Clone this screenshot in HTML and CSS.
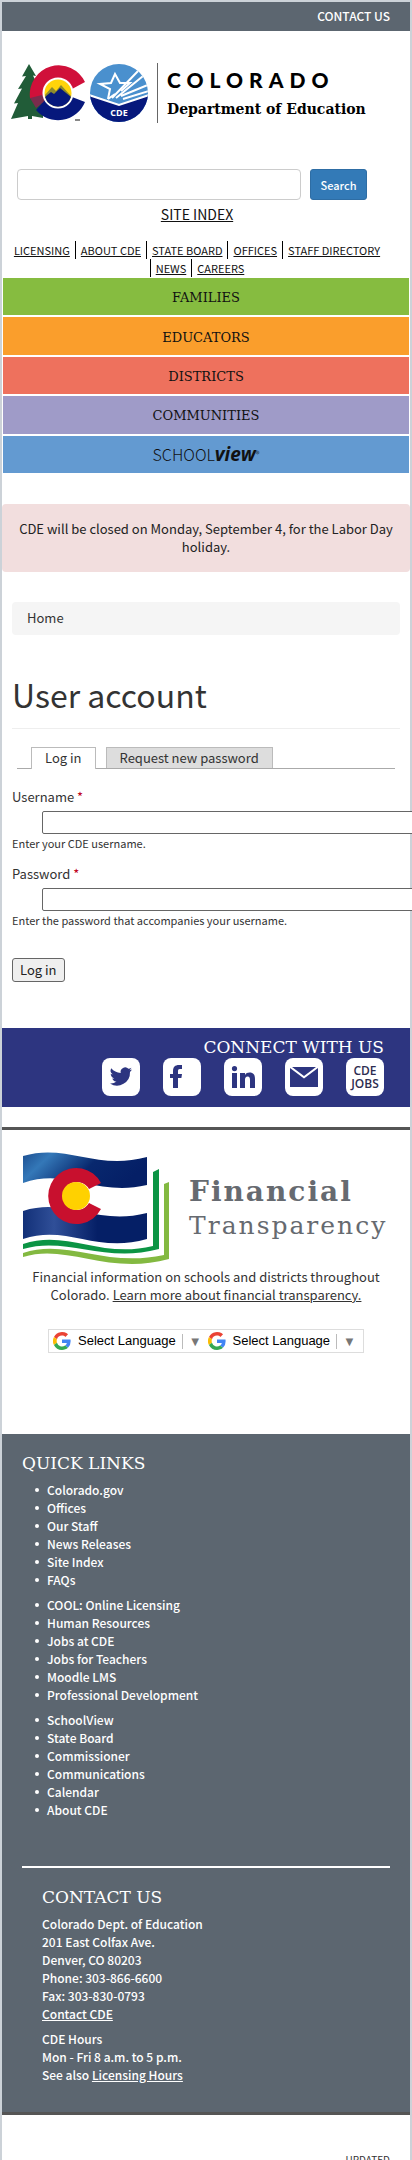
FILE: index.html
```html
<!DOCTYPE html>
<html lang="en">
<head>
<meta charset="utf-8">
<meta name="viewport" content="width=device-width, initial-scale=1">
<title>User account | CDE</title>
<link rel="stylesheet" href="styles.css">
</head>
<body>
<div class="page">
  <div class="topbar"><a href="#contact">CONTACT US</a></div>

  <header class="header">
    <a class="brand" href="#" aria-label="Colorado Department of Education">
      <svg class="brand-mark" viewBox="0 0 138 60" width="138" height="60" aria-hidden="true">
        <path fill="#215c38" d="M18 1l7 12-3-.5 6 12-3-.5 7 15v16l-11-2v3h-4v-3L0 56l7-16-4 .5 8-15-4 .5 8-13-4 .5z"/>
        <path fill="#d0103a" d="M74 19A29 29 0 0 0 19 35l9 5h12a14 14 0 0 1 21-14z"/>
        <path fill="#7a2c4d" d="M19 35l6 10 9-7-3-6z"/>
        <path fill="#06187c" d="M25 47l9-10 8 2a14 14 0 0 0 19-5l13 5A29 29 0 0 1 25 47z"/>
        <circle cx="47" cy="30" r="15.500" fill="#fff"/>
        <circle cx="47" cy="30" r="13.500" fill="#ffd40a"/>
        <path fill="#8d8b2c" d="M34 32l7-8 4 4 5-6 10 11-4 7H37z"/>
        <path fill="#06187c" d="M34 34l6-5 3 2 6-6 11 9a13.500 13.500 0 0 1-26 0z"/>
        <path fill="#888" d="M64 56h5v2h-5z"/>
        <clipPath id="seal"><circle cx="108" cy="30" r="29"/></clipPath>
        <g clip-path="url(#seal)">
          <path fill="#4a90ce" d="M78 0h60v60H78z"/>
          <path fill="#06187c" d="M78 32l30 10 30-10v28H78z"/>
          <path fill="none" stroke="#fff" stroke-width="2" d="M78 32l30 10 30-10M110 33l29-12M105 35l32-26M101 35l27-28M112 36l26-8"/>
          <path fill="none" stroke="#fff" stroke-width="2" d="M97 36l2-10-10-5 11-1 4-9 5 9 10 0-9 8"/>
          <path fill="none" stroke="#fff" stroke-width="2" d="M97 36l7-5"/>
        </g>
        <text class="seal-text" x="108" y="53" text-anchor="middle">CDE</text>
      </svg>
      <span class="brand-name">
        <span class="brand-state">COLORADO</span>
        <span class="brand-dept">Department of Education</span>
      </span>
    </a>

    <div class="tools">
      <form class="search">
        <input type="search" aria-label="Search site">
        <button type="button">Search</button>
      </form>
      <a class="site-index" href="#">SITE INDEX</a>
      <ul class="quick-nav">
        <li><a href="#">LICENSING</a></li>
        <li><a href="#">ABOUT CDE</a></li>
        <li><a href="#">STATE BOARD</a></li>
        <li><a href="#">OFFICES</a></li>
        <li><a href="#">STAFF DIRECTORY</a></li>
        <li><a href="#">NEWS</a></li>
        <li><a href="#">CAREERS</a></li>
      </ul>
    </div>

    <nav class="main-nav" aria-label="Main">
      <a class="families" href="#">FAMILIES</a>
      <a class="educators" href="#">EDUCATORS</a>
      <a class="districts" href="#">DISTRICTS</a>
      <a class="communities" href="#">COMMUNITIES</a>
      <a class="schoolview" href="#"><span>SCHOOL</span><b>view</b><sup>®</sup></a>
    </nav>
  </header>

  <div class="alert" role="status">CDE will be closed on Monday, September 4, for the Labor Day holiday.</div>

  <main class="main">
    <nav class="breadcrumb" aria-label="Breadcrumb"><a href="#">Home</a></nav>
    <h1>User account</h1>
    <nav class="tabs" aria-label="Account">
      <a class="active" href="#">Log in</a>
      <a href="#">Request new password</a>
    </nav>
    <form class="login">
      <div class="field">
        <label for="user">Username <span class="req">*</span></label>
        <input id="user" type="text">
        <p>Enter your CDE username.</p>
      </div>
      <div class="field">
        <label for="pass">Password <span class="req">*</span></label>
        <input id="pass" type="password">
        <p>Enter the password that accompanies your username.</p>
      </div>
      <button type="button">Log in</button>
    </form>
  </main>

  <section class="connect">
    <h2>CONNECT WITH US</h2>
    <div class="social">
      <a href="#" aria-label="Twitter"><svg viewBox="0 0 38 38"><path d="M30 11.500c-.8.400-1.700.6-2.600.7a4.500 4.500 0 0 0 2-2.500c-.9.500-1.800.9-2.900 1.100a4.600 4.600 0 0 0-7.800 4.200c-3.800-.2-7.200-2-9.400-4.800a4.600 4.600 0 0 0 1.400 6.100c-.7 0-1.400-.2-2-.6 0 2.200 1.500 4.100 3.600 4.600-.7.200-1.400.2-2 .1.600 1.800 2.200 3.100 4.200 3.200A9.200 9.200 0 0 1 8 25.500a13 13 0 0 0 20-11.500c.8-.7 1.500-1.500 2-2.500z"/></svg></a>
      <a href="#" aria-label="Facebook"><svg viewBox="0 0 38 38"><path d="M10 30V20H7v-4h3v-3c0-4 2-6 6-6h3v4h-2c-2 0-2 1-2 2.500V16h4l-.6 4H15v10z"/></svg></a>
      <a href="#" aria-label="LinkedIn"><svg viewBox="0 0 38 38"><path d="M8 15h5v15H8zM10.500 8a2.600 2.600 0 1 1 0 5.200 2.600 2.600 0 0 1 0-5.200zM16 15h5v2c1-1.600 2.500-2.400 4.500-2.400 4 0 5.500 2.400 5.500 6.400v9h-5v-8c0-2-.5-3.400-2.300-3.400-2 0-2.700 1.400-2.700 3.400v8h-5z"/></svg></a>
      <a href="#" aria-label="Email"><svg viewBox="0 0 38 38"><path d="M5 10l14 10.500L33 10v19H5zM7 9h24l-12 9z"/></svg></a>
      <a class="jobs" href="#">CDE JOBS</a>
    </div>
  </section>

  <section class="transparency">
    <a class="ft-logo" href="#" aria-label="Financial Transparency">
      <svg viewBox="0 0 148 114" width="148" height="114" aria-hidden="true">
        <defs>
          <linearGradient id="sky" x1="0" x2="1" y1="0" y2=".3"><stop offset="0" stop-color="#1d4f91"/><stop offset=".22" stop-color="#3478b8"/><stop offset=".6" stop-color="#08286e"/><stop offset="1" stop-color="#051f66"/></linearGradient>
          <linearGradient id="deep" x1="0" x2="1"><stop offset="0" stop-color="#123078"/><stop offset=".25" stop-color="#304f98"/><stop offset=".6" stop-color="#051f66"/><stop offset="1" stop-color="#051f66"/></linearGradient>
        </defs>
        <path fill="url(#sky)" d="M1 4C45-9 74 19 125 5v28C74 45 45 15 1 31z"/>
        <path fill="url(#deep)" d="M1 59C45 45 74 74 125 61v26C74 102 45 72 1 87z"/>
        <path fill="#c8102e" d="M79 31A28 28 0 1 0 79 57l-12-6a14 14 0 1 1 0-14z"/>
        <circle cx="54" cy="44" r="14" fill="#ffd100"/>
        <path fill="#0b9444" d="M1 92C45 77 78 107 131 94V20l6-3v80C82 112 45 84 1 97z"/>
        <path fill="#83b941" d="M1 101C45 86 82 116 142 103V32l5-2v77C86 124 45 91 1 105z"/>
      </svg>
      <span class="ft-name"><b>Financial</b><span>Transparency</span></span>
    </a>
    <p>Financial information on schools and districts throughout Colorado. <a href="#">Learn more about financial transparency.</a></p>
    <div class="translate">
      <a href="#"><svg viewBox="0 0 48 48" aria-hidden="true"><path fill="#ea4335" d="M24 9.500c3.500 0 6.700 1.200 9.200 3.600l6.900-6.900A24 24 0 0 0 2.600 13.200l8 6.200A14.300 14.300 0 0 1 24 9.500z"/><path fill="#4285f4" d="M47 24.600c0-1.600-.2-3.100-.4-4.600H24v9h12.900a11 11 0 0 1-4.700 7.200l7.700 6A23.600 23.600 0 0 0 47 24.600z"/><path fill="#fbbc05" d="M10.500 28.600a14.500 14.500 0 0 1 0-9.200l-8-6.200a24 24 0 0 0 0 21.600z"/><path fill="#34a853" d="M24 48c6.500 0 11.900-2.100 15.900-5.800l-7.700-6A14.300 14.300 0 0 1 10.500 28.600l-8 6.200A24 24 0 0 0 24 48z"/></svg><span>Select Language</span><em>▼</em></a>
      <a href="#"><svg viewBox="0 0 48 48" aria-hidden="true"><path fill="#ea4335" d="M24 9.500c3.500 0 6.700 1.200 9.200 3.600l6.900-6.900A24 24 0 0 0 2.600 13.200l8 6.200A14.300 14.300 0 0 1 24 9.500z"/><path fill="#4285f4" d="M47 24.600c0-1.600-.2-3.100-.4-4.600H24v9h12.900a11 11 0 0 1-4.700 7.200l7.700 6A23.600 23.600 0 0 0 47 24.600z"/><path fill="#fbbc05" d="M10.500 28.600a14.500 14.500 0 0 1 0-9.200l-8-6.200a24 24 0 0 0 0 21.600z"/><path fill="#34a853" d="M24 48c6.500 0 11.900-2.100 15.900-5.800l-7.700-6A14.300 14.300 0 0 1 10.500 28.600l-8 6.200A24 24 0 0 0 24 48z"/></svg><span>Select Language</span><em>▼</em></a>
    </div>
  </section>

  <footer class="footer">
    <h2>QUICK LINKS</h2>
    <ul>
      <li><a href="#">Colorado.gov</a></li>
      <li><a href="#">Offices</a></li>
      <li><a href="#">Our Staff</a></li>
      <li><a href="#">News Releases</a></li>
      <li><a href="#">Site Index</a></li>
      <li><a href="#">FAQs</a></li>
    </ul>
    <ul>
      <li><a href="#">COOL: Online Licensing</a></li>
      <li><a href="#">Human Resources</a></li>
      <li><a href="#">Jobs at CDE</a></li>
      <li><a href="#">Jobs for Teachers</a></li>
      <li><a href="#">Moodle LMS</a></li>
      <li><a href="#">Professional Development</a></li>
    </ul>
    <ul>
      <li><a href="#">SchoolView</a></li>
      <li><a href="#">State Board</a></li>
      <li><a href="#">Commissioner</a></li>
      <li><a href="#">Communications</a></li>
      <li><a href="#">Calendar</a></li>
      <li><a href="#">About CDE</a></li>
    </ul>
    <div class="contact" id="contact">
      <h2>CONTACT US</h2>
      <p>Colorado Dept. of Education<br>201 East Colfax Ave.<br>Denver, CO 80203<br>Phone: 303-866-6600<br>Fax: 303-830-0793<br><a href="#">Contact CDE</a></p>
      <p>CDE Hours<br>Mon - Fri 8 a.m. to 5 p.m.<br>See also <a href="#">Licensing Hours</a></p>
    </div>
  </footer>
  <div class="updated">UPDATED</div>
</div>
</body>
</html>
```
FILE: styles.css
```css
* { box-sizing: border-box; }

html { overflow-x: hidden; }

body {
  margin: 0;
  font: 13px/18px "Noto Sans CJK SC", "Open Sans", sans-serif;
  color: #333;
  background: #fff;
}

a { color: inherit; text-decoration: none; }
h1, h2, p, ul { margin: 0; padding: 0; }

.page {
  border: 2px solid #ccd2d8;
  border-bottom: 0;
}

.topbar {
  padding: 5px 20px 6px;
  background: #5c6670;
  color: #fff;
  font-size: 12px;
  font-weight: 500;
  text-align: right;
}

/* Header */
.brand {
  display: flex;
  align-items: center;
  margin: 32px 9px 0;
  color: #000;
}
.brand-mark { flex: none; }
.seal-text { font: bold 9px "Open Sans", sans-serif; fill: #fff; }
.brand-name {
  display: flex;
  flex-direction: column;
  gap: 8px;
  margin-left: 8px;
  padding: 5px 0;
  border-left: 1px solid #666;
  padding-left: 9px;
  white-space: nowrap;
}
.brand-state {
  font: 900 21px/24px Lato, sans-serif;
  letter-spacing: 6px;
}
.brand-dept { font: bold 14px/18px "DejaVu Serif", serif; }

.tools {
  display: flex;
  flex-direction: column;
  align-items: center;
  margin: 46px 23px 0 5px;
  color: #111;
}
.search {
  display: flex;
  align-self: stretch;
  gap: 9px;
  margin: 0 20px 0 10px;
}
.search input {
  flex: 1;
  min-width: 0;
  height: 31px;
  border: 1px solid #ccc;
  border-radius: 4px;
}
.search button {
  width: 57px;
  border: 1px solid #2e6da4;
  border-radius: 3px;
  background: #337ab7;
  color: #fff;
  font: 500 11px/18px "Noto Sans CJK SC", sans-serif;
}
.site-index {
  margin-top: 4px;
  font-size: 14px;
  line-height: 20px;
  text-decoration: underline;
}
.quick-nav {
  display: flex;
  flex-wrap: wrap;
  justify-content: center;
  column-gap: 5px;
  margin-top: 17px;
  font-size: 11px;
  list-style: none;
}
.quick-nav li + li {
  padding-left: 5px;
  border-left: 1px solid #000;
}
.quick-nav a { text-decoration: underline; }

.main-nav {
  display: grid;
  grid-auto-rows: 1fr;
  gap: 2px;
  min-height: 195px;
  margin: 1px 1px 0;
}
.main-nav a {
  display: flex;
  align-items: center;
  justify-content: center;
  padding-top: 3px;
  color: #111;
  font: 13px/18px "DejaVu Serif", serif;
}
.main-nav .families { background: #86bc40; }
.main-nav .educators { background: #fa9e2c; }
.main-nav .districts { background: #ee715d; }
.main-nav .communities { background: #9f9bc8; }
.main-nav .schoolview {
  padding-top: 0;
  background: #639ad1;
  font: 300 16px/20px "Noto Sans CJK SC", sans-serif;
}
.schoolview b { font: italic bold 19px/20px "Open Sans", sans-serif; }
.schoolview sup { font-size: 8px; }

.alert {
  margin-top: 31px;
  padding: 16px 12px;
  border-radius: 4px;
  background: #f2dede;
  color: #222;
  text-align: center;
}

/* Login */
.main { padding: 30px 10px 46px; }
.breadcrumb {
  padding: 7px 15px 8px;
  border-radius: 4px;
  background: #f5f5f5;
}
h1 {
  margin-top: 39px;
  padding-bottom: 14px;
  border-bottom: 1px solid #eee;
  font-size: 32px;
  font-weight: 400;
  line-height: 40px;
}
.tabs {
  display: flex;
  gap: 10px;
  margin: 18px 5px 0;
  padding: 0 14px;
  border-bottom: 1px solid #aaa;
}
.tabs a {
  padding: 0 13px;
  border: 1px solid #bbb;
  border-bottom: 0;
  background: #ddd;
  line-height: 20px;
}
.tabs .active {
  margin-bottom: -1px;
  background: #fff;
}
.login { margin-top: 19px; }
.field + .field { margin-top: 13px; }
.field label { display: block; }
.field input {
  display: block;
  width: 100%;
  height: 23px;
  margin: 5px 0 0 30px;
  border: 1px solid #666;
  border-radius: 2px;
}
.field p { font-size: 11px; }
.req { color: #c00020; }
.login button {
  margin-top: 29px;
  padding: 2px 7px;
  border: 1px solid #666;
  border-radius: 3px;
  background: #efefef;
  color: #222;
  font: 13px/18px "Noto Sans CJK SC", sans-serif;
}

/* Connect */
.connect {
  padding: 8px 26px 11px;
  background: #2d3580;
  color: #fff;
}
h2 { font: 17px/22px "DejaVu Serif", serif; }
.connect h2 { text-align: right; }
.social {
  display: flex;
  justify-content: flex-end;
  gap: 23px;
}
.social a {
  width: 38px;
  height: 38px;
  border-radius: 8px;
  background: #fff;
  fill: #2d3580;
}
.social .jobs {
  padding-top: 6px;
  color: #2d2d50;
  font: 600 12px/13px "Open Sans", sans-serif;
  text-align: center;
}

/* Financial transparency */
.transparency {
  margin-top: 20px;
  padding: 22px 20px 81px;
  border-top: 3px solid #555;
  text-align: center;
}
.ft-logo {
  display: flex;
  align-items: center;
  gap: 19px;
  color: #666a70;
}
.ft-logo svg { flex: none; }
.ft-name {
  display: flex;
  flex-direction: column;
  font: 25px/34px "DejaVu Serif", serif;
  letter-spacing: 2px;
  text-align: left;
}
.ft-name b { font-size: 28px; }
.transparency p { margin-top: 2px; }
.transparency p a { text-decoration: underline; }
.translate {
  display: flex;
  gap: 6px;
  width: fit-content;
  margin: 25px auto 0;
  padding: 0 7px 0 4px;
  border: 1px solid #ddd;
  color: #000;
}
.translate a {
  display: flex;
  align-items: center;
  font: 13px/22px "Liberation Sans", Arial, sans-serif;
}
.translate svg { width: 18px; height: 18px; margin-right: 7px; }
.translate em {
  margin-left: 6px;
  padding-left: 6px;
  border-left: 1px solid #bbb;
  color: #777;
  font-style: normal;
  line-height: 15px;
}

/* Footer */
.footer {
  padding: 18px 20px 28px;
  border-bottom: 3px solid #555;
  background: #5c6670;
  color: #fff;
  font-size: 12px;
  font-weight: 500;
}
.footer ul {
  margin-top: 7px;
  padding-left: 13px;
  list-style: none;
}
.footer li {
  display: flex;
  align-items: center;
  gap: 8px;
}
.footer li::before {
  content: "";
  width: 4px;
  height: 4px;
  border-radius: 50%;
  background: #fff;
}
.contact {
  margin-top: 47px;
  padding: 18px 20px 0;
  border-top: 2px solid #fff;
}
.contact p { margin-top: 7px; }
.contact a { text-decoration: underline; }

.updated {
  padding: 36px 20px 0;
  font-size: 10px;
  text-align: right;
}
```
